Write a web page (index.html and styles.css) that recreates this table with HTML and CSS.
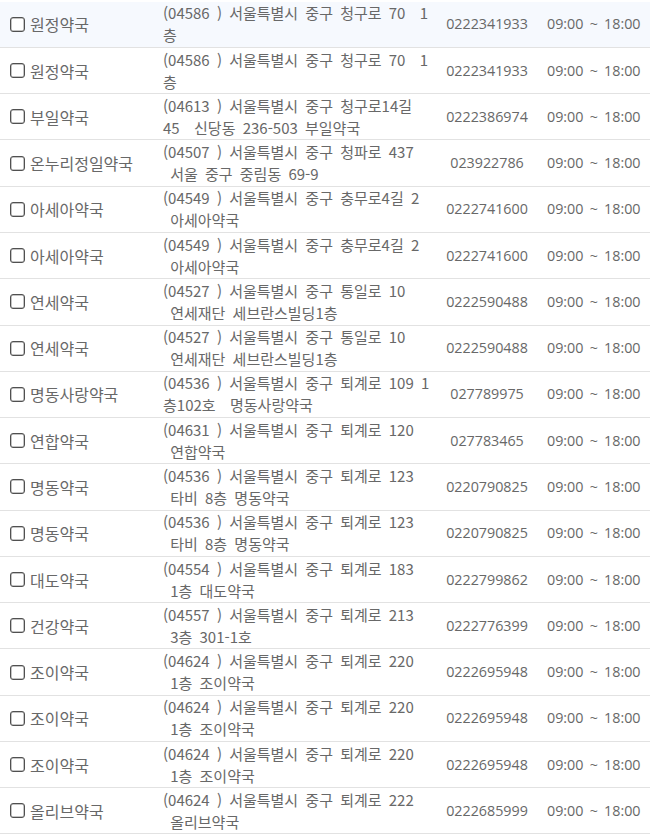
FILE: index.html
```html
<!DOCTYPE html>
<html lang="ko">
<head>
<meta charset="utf-8">
<title>약국 목록</title>
<link rel="stylesheet" href="styles.css">
</head>
<body>
<div class="list">
  <div class="row first">
    <label class="name"><input type="checkbox" class="chk">원정약국</label>
    <div class="addr">(04586 ) 서울특별시 중구 청구로 70 &nbsp;1층</div>
    <div class="tel">0222341933</div>
    <div class="hours">09:00 ~ 18:00</div>
  </div>
  <div class="row">
    <label class="name"><input type="checkbox" class="chk">원정약국</label>
    <div class="addr">(04586 ) 서울특별시 중구 청구로 70 &nbsp;1층</div>
    <div class="tel">0222341933</div>
    <div class="hours">09:00 ~ 18:00</div>
  </div>
  <div class="row">
    <label class="name"><input type="checkbox" class="chk">부일약국</label>
    <div class="addr">(04613 ) 서울특별시 중구 청구로14길 45 &nbsp;신당동 236-503 부일약국</div>
    <div class="tel">0222386974</div>
    <div class="hours">09:00 ~ 18:00</div>
  </div>
  <div class="row">
    <label class="name"><input type="checkbox" class="chk">온누리정일약국</label>
    <div class="addr">(04507 ) 서울특별시 중구 청파로 437 &nbsp;서울 중구 중림동 69-9</div>
    <div class="tel">023922786</div>
    <div class="hours">09:00 ~ 18:00</div>
  </div>
  <div class="row">
    <label class="name"><input type="checkbox" class="chk">아세아약국</label>
    <div class="addr">(04549 ) 서울특별시 중구 충무로4길 2 &nbsp;아세아약국</div>
    <div class="tel">0222741600</div>
    <div class="hours">09:00 ~ 18:00</div>
  </div>
  <div class="row">
    <label class="name"><input type="checkbox" class="chk">아세아약국</label>
    <div class="addr">(04549 ) 서울특별시 중구 충무로4길 2 &nbsp;아세아약국</div>
    <div class="tel">0222741600</div>
    <div class="hours">09:00 ~ 18:00</div>
  </div>
  <div class="row">
    <label class="name"><input type="checkbox" class="chk">연세약국</label>
    <div class="addr">(04527 ) 서울특별시 중구 통일로 10 &nbsp;연세재단 세브란스빌딩1층</div>
    <div class="tel">0222590488</div>
    <div class="hours">09:00 ~ 18:00</div>
  </div>
  <div class="row">
    <label class="name"><input type="checkbox" class="chk">연세약국</label>
    <div class="addr">(04527 ) 서울특별시 중구 통일로 10 &nbsp;연세재단 세브란스빌딩1층</div>
    <div class="tel">0222590488</div>
    <div class="hours">09:00 ~ 18:00</div>
  </div>
  <div class="row">
    <label class="name"><input type="checkbox" class="chk">명동사랑약국</label>
    <div class="addr">(04536 ) 서울특별시 중구 퇴계로 109 1층102호 &nbsp;명동사랑약국</div>
    <div class="tel">027789975</div>
    <div class="hours">09:00 ~ 18:00</div>
  </div>
  <div class="row">
    <label class="name"><input type="checkbox" class="chk">연합약국</label>
    <div class="addr">(04631 ) 서울특별시 중구 퇴계로 120 &nbsp;연합약국</div>
    <div class="tel">027783465</div>
    <div class="hours">09:00 ~ 18:00</div>
  </div>
  <div class="row">
    <label class="name"><input type="checkbox" class="chk">명동약국</label>
    <div class="addr">(04536 ) 서울특별시 중구 퇴계로 123 &nbsp;타비 8층 명동약국</div>
    <div class="tel">0220790825</div>
    <div class="hours">09:00 ~ 18:00</div>
  </div>
  <div class="row">
    <label class="name"><input type="checkbox" class="chk">명동약국</label>
    <div class="addr">(04536 ) 서울특별시 중구 퇴계로 123 &nbsp;타비 8층 명동약국</div>
    <div class="tel">0220790825</div>
    <div class="hours">09:00 ~ 18:00</div>
  </div>
  <div class="row">
    <label class="name"><input type="checkbox" class="chk">대도약국</label>
    <div class="addr">(04554 ) 서울특별시 중구 퇴계로 183 &nbsp;1층 대도약국</div>
    <div class="tel">0222799862</div>
    <div class="hours">09:00 ~ 18:00</div>
  </div>
  <div class="row">
    <label class="name"><input type="checkbox" class="chk">건강약국</label>
    <div class="addr">(04557 ) 서울특별시 중구 퇴계로 213 &nbsp;3층 301-1호</div>
    <div class="tel">0222776399</div>
    <div class="hours">09:00 ~ 18:00</div>
  </div>
  <div class="row">
    <label class="name"><input type="checkbox" class="chk">조이약국</label>
    <div class="addr">(04624 ) 서울특별시 중구 퇴계로 220 &nbsp;1층 조이약국</div>
    <div class="tel">0222695948</div>
    <div class="hours">09:00 ~ 18:00</div>
  </div>
  <div class="row">
    <label class="name"><input type="checkbox" class="chk">조이약국</label>
    <div class="addr">(04624 ) 서울특별시 중구 퇴계로 220 &nbsp;1층 조이약국</div>
    <div class="tel">0222695948</div>
    <div class="hours">09:00 ~ 18:00</div>
  </div>
  <div class="row">
    <label class="name"><input type="checkbox" class="chk">조이약국</label>
    <div class="addr">(04624 ) 서울특별시 중구 퇴계로 220 &nbsp;1층 조이약국</div>
    <div class="tel">0222695948</div>
    <div class="hours">09:00 ~ 18:00</div>
  </div>
  <div class="row">
    <label class="name"><input type="checkbox" class="chk">올리브약국</label>
    <div class="addr">(04624 ) 서울특별시 중구 퇴계로 222 &nbsp;올리브약국</div>
    <div class="tel">0222685999</div>
    <div class="hours">09:00 ~ 18:00</div>
  </div>
</div>
</body>
</html>
```

FILE: styles.css
```css
html, body {
  margin: 0;
  padding: 0;
  background: #ffffff;
}

body {
  font-family: "Noto Sans CJK KR", sans-serif;
  font-size: 16px;
  color: #686868;
  padding-top: 1.7px;
}

.list {
  display: flex;
  flex-direction: column;
}

.row {
  box-sizing: border-box;
  height: 46.28px;
  display: grid;
  grid-template-columns: 155px 283px 98px 1fr;
  align-items: center;
  border-bottom: 1px solid #e2e2e2;
}

.row.first {
  background: #f6f9fe;
}

.name {
  display: flex;
  align-items: center;
  padding-left: 10px;
  white-space: nowrap;
  line-height: 22px;
}

.chk {
  appearance: none;
  -webkit-appearance: none;
  box-sizing: border-box;
  width: 15px;
  height: 15px;
  margin: 0 5px 0 0;
  border: 1px solid #505050;
  border-radius: 3px;
  background: #ffffff;
  box-shadow: inset 0 0 0 0.5px #8a8a8a;
  flex: none;
}

.addr {
  font-size: 15px;
  word-spacing: 3px;
  padding: 0 6.5px 0 8px;
  line-height: 22px;
}

.tel {
  font-family: "Open Sans", "Noto Sans CJK KR", sans-serif;
  font-size: 14.3px;
  text-align: center;
  line-height: 22px;
  white-space: nowrap;
}

.hours {
  font-family: "Open Sans", "Noto Sans CJK KR", sans-serif;
  font-size: 14.3px;
  word-spacing: 2.5px;
  padding-left: 11px;
  line-height: 22px;
  white-space: nowrap;
}
```
